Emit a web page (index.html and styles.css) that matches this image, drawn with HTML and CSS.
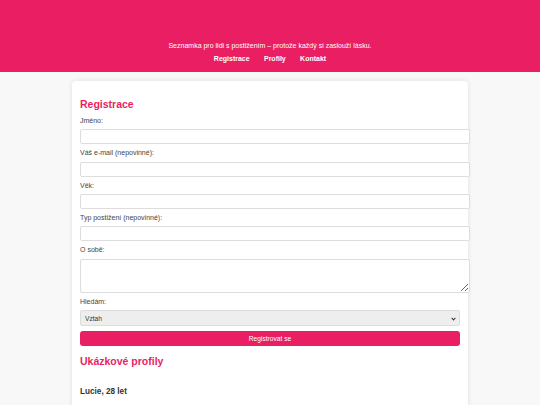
FILE: index.html
```html
<!DOCTYPE html>
<html lang="cs">
<head>
<meta charset="utf-8">
<title>Seznamka</title>
<link rel="stylesheet" href="styles.css">
</head>
<body>
<header class="site-header">
  <p class="tagline">Seznamka pro lidi s postižením – protože každý si zaslouží lásku.</p>
  <nav class="main-nav">
    <a href="#registrace">Registrace</a>
    <a href="#profily">Profily</a>
    <a href="#kontakt">Kontakt</a>
  </nav>
</header>
<main class="container">
  <section class="card">
    <h2 class="section-title" id="registrace">Registrace</h2>
    <form class="reg-form">
      <label class="field-label" for="jmeno">Jméno:</label>
      <input class="field" id="jmeno" type="text">
      <label class="field-label" for="email">Váš e-mail (nepovinné):</label>
      <input class="field" id="email" type="email">
      <label class="field-label" for="vek">Věk:</label>
      <input class="field" id="vek" type="number">
      <label class="field-label" for="typ">Typ postižení (nepovinné):</label>
      <input class="field" id="typ" type="text">
      <label class="field-label" for="osobe">O sobě:</label>
      <textarea class="field field-area" id="osobe"></textarea>
      <label class="field-label" for="hledam">Hledám:</label>
      <select class="field-select" id="hledam">
        <option>Vztah</option>
        <option>Přátelství</option>
      </select>
      <button class="btn-submit" type="button">Registrovat se</button>
    </form>
    <h2 class="section-title" id="profily">Ukázkové profily</h2>
    <div class="profile">
      <h3 class="profile-name">Lucie, 28 let</h3>
    </div>
  </section>
</main>
</body>
</html>
```

FILE: styles.css
```css
body {
  margin: 0;
  background: #f8f8f8;
  font-family: "Liberation Sans", Arial, sans-serif;
  font-size: 7px;
  color: #333;
}

.site-header {
  background: #e91e63;
  color: #fff;
  text-align: center;
  padding: 42px 0 9px;
}

.tagline {
  margin: 0 0 5px;
  font-size: 7px;
  line-height: 8px;
}

.main-nav {
  line-height: 8px;
}

.main-nav a {
  color: #fff;
  text-decoration: none;
  font-weight: bold;
  margin: 0 6.2px;
}

.container {
  width: 396px;
  margin: 9px auto 0;
}

.card {
  background: #fff;
  border-radius: 4px;
  box-shadow: 0 0 5px rgba(0, 0, 0, 0.1);
  padding: 8px 8px 20px;
}

.section-title {
  color: #e91e63;
  font-size: 10.5px;
  line-height: 12px;
  margin: 8.7px 0 7.3px;
}

.field-label {
  display: block;
  line-height: 8px;
  color: #444;
}

.field {
  display: block;
  box-sizing: content-box;
  width: 100%;
  height: 13px;
  padding: 0 4px;
  margin: 4.5px 0 4.8px;
  border: 1px solid #ddd;
  border-radius: 2px;
  font-family: "Liberation Sans", Arial, sans-serif;
  font-size: 6.67px;
  background: #fff;
}

.field-area {
  height: 32.3px;
  resize: both;
}

.field-select {
  display: block;
  width: 100%;
  height: 16px;
  margin: 4.5px 0 0;
  padding: 0 4px;
  border: 1px solid #ddd;
  border-radius: 2px;
  background-color: #eee;
  background-image: url("data:image/svg+xml,%3Csvg xmlns='http://www.w3.org/2000/svg' width='6' height='4' viewBox='0 0 6 4'%3E%3Cpath d='M0.8 0.8 L3 3 L5.2 0.8' fill='none' stroke='%23333' stroke-width='1.1'/%3E%3C/svg%3E");
  background-repeat: no-repeat;
  background-position: right 3px center;
  background-size: 5px 3.5px;
  -webkit-appearance: none;
  appearance: none;
  color: #333;
  font-family: "Liberation Sans", Arial, sans-serif;
  font-size: 6.67px;
}

.btn-submit {
  display: block;
  width: 100%;
  height: 15px;
  margin-top: 4.7px;
  border: none;
  border-radius: 3px;
  background: #e91e63;
  color: #fff;
  font-family: "Liberation Sans", Arial, sans-serif;
  font-size: 6.67px;
}

.profile {
  padding-top: 5px;
}

.profile-name {
  font-size: 8.2px;
  line-height: 9.4px;
  margin: 8.2px 0;
  color: #333;
}
```
